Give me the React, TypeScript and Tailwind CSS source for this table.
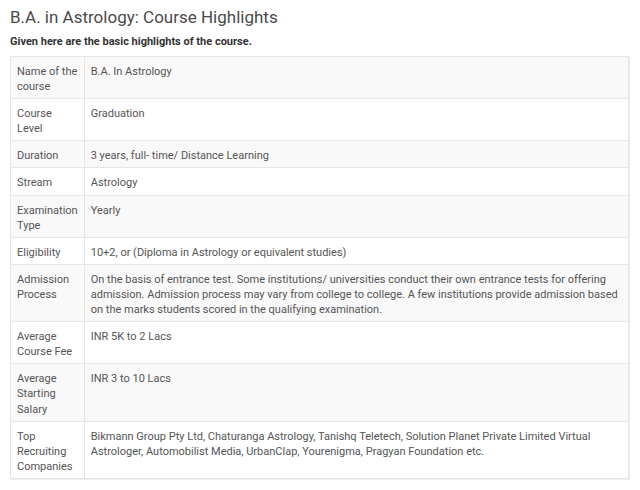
const rows: [string, string][] = [
  ['Name of the course', 'B.A. In Astrology'],
  ['Course Level', 'Graduation'],
  ['Duration', '3 years, full- time/ Distance Learning'],
  ['Stream', 'Astrology'],
  ['Examination Type', 'Yearly'],
  ['Eligibility', '10+2, or (Diploma in Astrology or equivalent studies)'],
  [
    'Admission Process',
    'On the basis of entrance test. Some institutions/ universities conduct their own entrance tests for offering admission. Admission process may vary from college to college. A few institutions provide admission based on the marks students scored in the qualifying examination.',
  ],
  ['Average Course Fee', 'INR 5K to 2 Lacs'],
  ['Average Starting Salary', 'INR 3 to 10 Lacs'],
  [
    'Top Recruiting Companies',
    'Bikmann Group Pty Ltd, Chaturanga Astrology, Tanishq Teletech, Solution Planet Private Limited Virtual Astrologer, Automobilist Media, UrbanClap, Yourenigma, Pragyan Foundation etc.',
  ],
]

export default function App() {
  return (
    <div className="bg-white w-[640px] h-[490px] overflow-hidden px-[10px] pt-[6px] font-['Roboto',sans-serif]">
      <h1 className="text-[17px] leading-[22px] text-[#4a4a4a]">B.A. in Astrology: Course Highlights</h1>
      <p className="mt-[6px] text-[11px] leading-[15px] font-bold text-[#333]">
        Given here are the basic highlights of the course.
      </p>

      {/* highlights table */}
      <table className="mt-[7px] w-[619px] border-collapse border border-[#e6e6e6] text-[11px] leading-[15.1px] text-[#555] shadow-[1px_1px_0_#eee]">
        <tbody>
          {rows.map(([label, value], i) => (
            <tr key={label} className={i % 2 === 0 ? 'bg-[#f9f9f9]' : 'bg-white'}>
              <td className="w-[73px] border border-[#e6e6e6] px-[6px] pt-[7px] pb-[4px] align-top">{label}</td>
              <td className="border border-[#e6e6e6] px-[6px] pt-[7px] pb-[4px] align-top">{value}</td>
            </tr>
          ))}
        </tbody>
      </table>
    </div>
  )
}
